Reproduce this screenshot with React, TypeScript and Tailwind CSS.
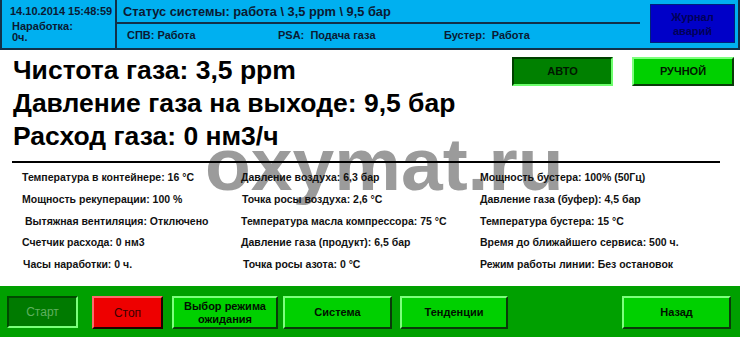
import React from "react";

const leftCol = [
  { t: "Температура в контейнере: 16 °C", o: "" },
  { t: "Мощность рекуперации: 100 %", o: "" },
  { t: "Вытяжная вентиляция: Отключено", o: "ml-[3px]" },
  { t: "Счетчик расхода: 0 нм3", o: "" },
  { t: "Часы наработки: 0 ч.", o: "ml-[1px]" },
];
const midCol = [
  { t: "Давление воздуха: 6,3 бар", o: "" },
  { t: "Точка росы воздуха: 2,6 °C", o: "ml-[1px]" },
  { t: "Температура масла компрессора: 75 °C", o: "" },
  { t: "Давление газа (продукт): 6,5 бар", o: "" },
  { t: "Точка росы азота: 0 °C", o: "ml-[2px]" },
];
const rightCol = [
  { t: "Мощность бустера: 100% (50Гц)", o: "" },
  { t: "Давление газа (буфер): 4,5 бар", o: "" },
  { t: "Температура бустера: 15 °C", o: "" },
  { t: "Время до ближайшего сервиса: 500 ч.", o: "" },
  { t: "Режим работы линии: Без остановок", o: "" },
];

function Col({ items, cls }: { items: { t: string; o: string }[]; cls: string }) {
  return (
    <div className={`flex flex-col ${cls}`}>
      {items.map((i) => (
        <div key={i.t} className={`h-[21.75px] leading-[21.75px] text-[10.5px] font-bold text-[#111] whitespace-nowrap ${i.o}`}>
          {i.t}
        </div>
      ))}
    </div>
  );
}

const raised =
  "border-2 border-t-[#7dff7d] border-l-[#7dff7d] border-b-[#0a3a0a] border-r-[#0a3a0a] bg-[#00d000]";

export default function App() {
  return (
    <div className="w-[740px] h-[337px] bg-white flex flex-col font-['Liberation_Sans',Arial,sans-serif] relative overflow-hidden">
      {/* watermark */}
      <div className="absolute left-[205px] top-[127px] text-[75px] font-bold text-[#7a7a7a] opacity-75 pointer-events-none leading-none">
        oxymat.ru
      </div>

      {/* header */}
      <div className="relative h-[50px] flex bg-[#00b0f0] border-2 border-t-0 border-[#123048] text-[#0b1a33] text-[11px] font-bold">
        <div className="w-[115px] border-r-2 border-[#123048] flex flex-col pl-[8px] pt-[5px] leading-[12px]">
          <div className="mb-[4px]">14.10.2014 15:48:59</div>
          <div className="pl-[2px] leading-[10px]">Наработка:</div>
          <div className="pl-[2px] leading-[12px]">0ч.</div>
        </div>
        <div className="w-[523px] flex flex-col">
          <div className="h-[24px] border-b-2 border-[#123048] pl-[6px] leading-[24px] text-[12.8px]">
            Статус системы: работа \ 3,5 ppm \ 9,5 бар
          </div>
          <div className="flex-1 flex items-center pl-[10px] pb-[1px]">
            <div className="w-[151px]">СПВ: Работа</div>
            <div className="w-[166px]">PSA:&nbsp; Подача газа</div>
            <div>Бустер:&nbsp; Работа</div>
          </div>
        </div>
        <div className="flex-1 pl-[10px] pt-[4px]">
          <div className="w-[85px] h-[39px] bg-[#0000c8] border border-[#00207a] flex flex-col items-center justify-center leading-[14px] text-[#000058]">
            <div>Журнал</div>
            <div>аварий</div>
          </div>
        </div>
      </div>

      {/* main */}
      <div className="relative flex-1 flex flex-col">
        <div className="flex justify-between pt-[4px]">
          <div className="pl-[13px] flex flex-col text-[26.5px] font-bold leading-[33px] text-black whitespace-nowrap">
            <div>Чистота газа: 3,5 ppm</div>
            <div>Давление газа на выходе: 9,5 бар</div>
            <div>Расход газа: 0 нм3/ч</div>
          </div>
          <div className="flex gap-[19px] pr-[6px] pt-[3px] items-start">
            <div className="w-[101px] h-[29px] border-2 border-t-[#004000] border-l-[#004000] border-b-[#6cff6c] border-r-[#6cff6c] bg-[#008000] flex items-center justify-center text-[11px] font-bold text-[#001800]">
              АВТО
            </div>
            <div className={`w-[102px] h-[29px] ${raised} flex items-center justify-center text-[11px] font-bold text-[#001800]`}>
              РУЧНОЙ
            </div>
          </div>
        </div>
        <div className="ml-[12px] w-[708px] h-[2px] bg-black mt-[8px]" />
        <div className="flex mt-[4px]">
          <Col items={leftCol} cls="pl-[22px] w-[241px]" />
          <Col items={midCol} cls="w-[239px]" />
          <Col items={rightCol} cls="" />
        </div>
      </div>

      {/* footer */}
      <div className="relative h-[51px] bg-[#00a000] flex items-start pt-[10px] pl-[7px] pr-[9px]">
        <div className="w-[71px] h-[32px] border-2 border-t-[#004a00] border-l-[#004a00] border-b-[#7aff7a] border-r-[#7aff7a] bg-[#007a00] flex items-center justify-center text-[12px] text-[#5fb05f]">
          Старт
        </div>
        <div className="ml-[14px] w-[71px] h-[33px] border-2 border-t-[#ff6a6a] border-l-[#ff6a6a] border-b-[#200000] border-r-[#200000] bg-[#ee0000] flex items-center justify-center text-[12px] text-[#3a0000]">
          Стоп
        </div>
        <div className={`ml-[9px] w-[106px] h-[33px] ${raised} flex flex-col items-center justify-center text-[11px] font-bold text-[#001000] leading-[13px]`}>
          <div>Выбор режима</div>
          <div>ожидания</div>
        </div>
        <div className={`ml-[5px] w-[109px] h-[33px] ${raised} flex items-center justify-center text-[11px] font-bold text-[#001000]`}>
          Система
        </div>
        <div className={`ml-[8px] w-[108px] h-[33px] ${raised} flex items-center justify-center text-[11px] font-bold text-[#001000]`}>
          Тенденции
        </div>
        <div className={`ml-auto w-[109px] h-[33px] ${raised} flex items-center justify-center text-[11px] font-bold text-[#001000]`}>
          Назад
        </div>
      </div>
    </div>
  );
}
